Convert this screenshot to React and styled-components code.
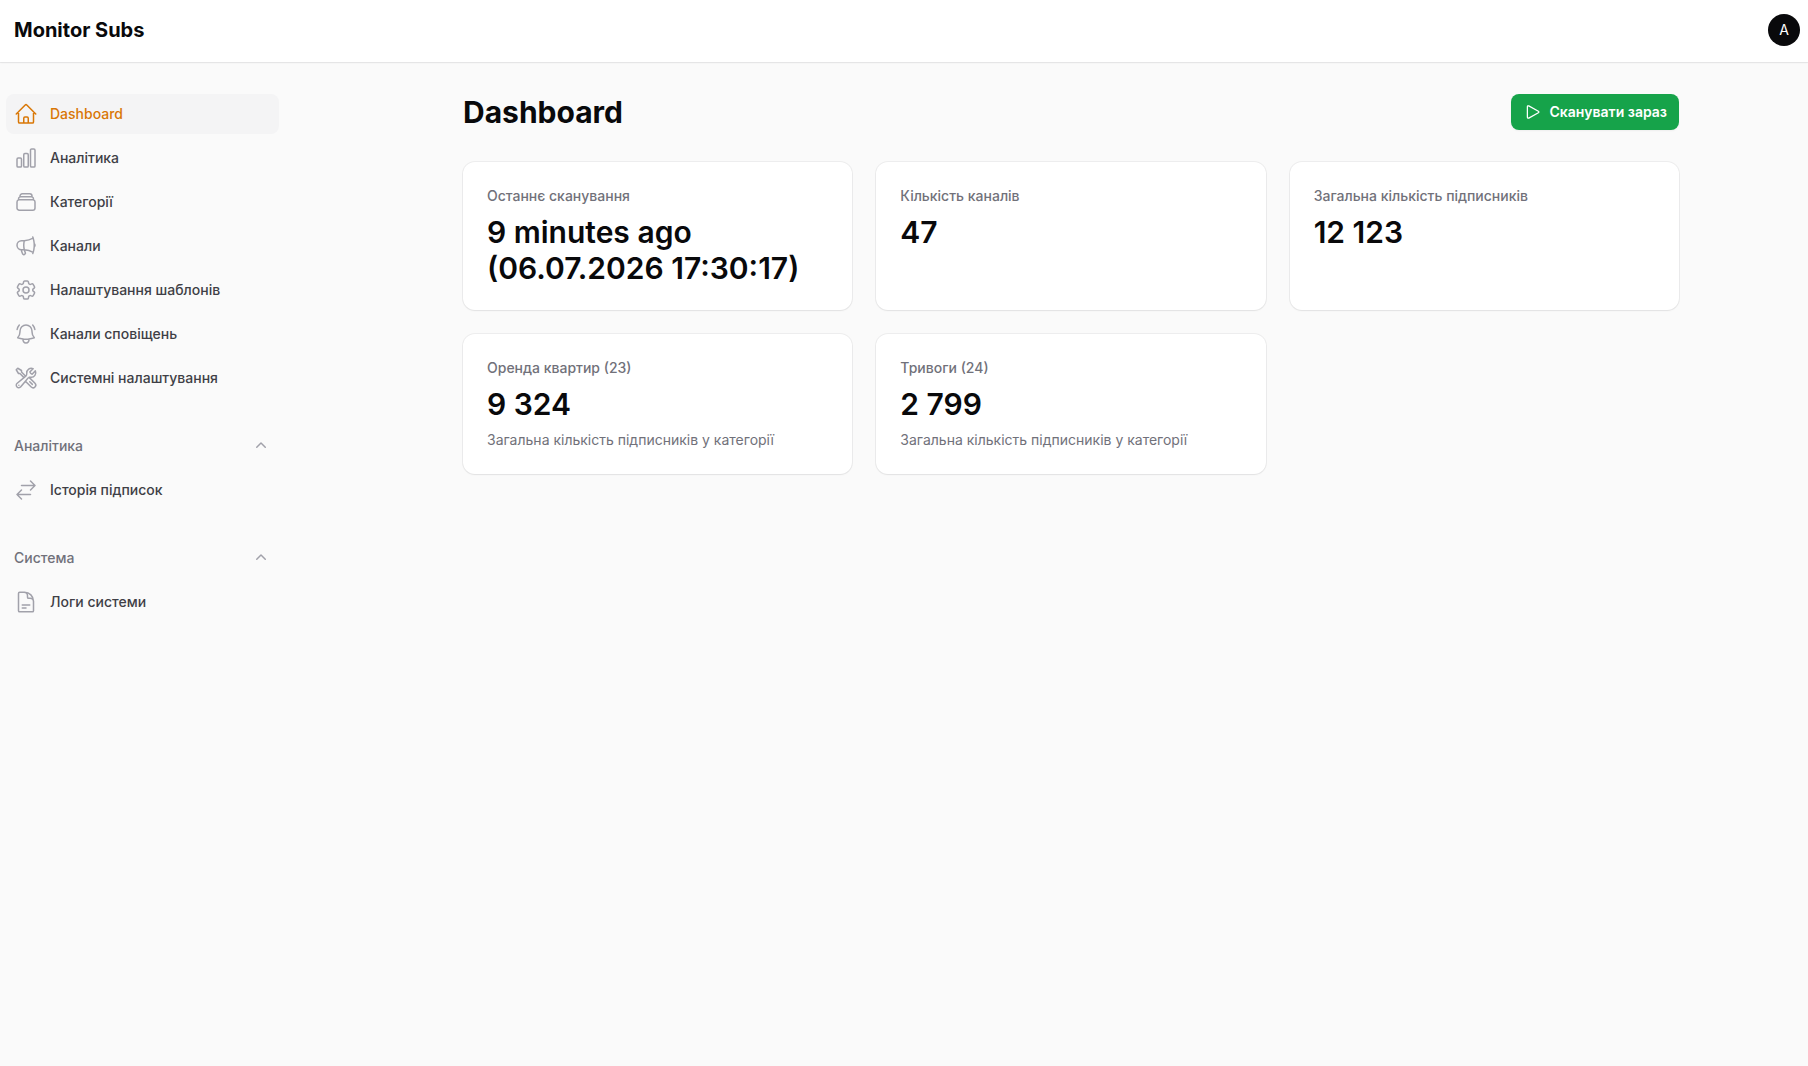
import { useState } from "react"
import styled, { createGlobalStyle } from "styled-components"
import {
	HiMiniChevronUp,
	HiOutlineArrowsRightLeft,
	HiOutlineBellAlert,
	HiOutlineChartBar,
	HiOutlineCog6Tooth,
	HiOutlineDocumentText,
	HiOutlineHome,
	HiOutlineMegaphone,
	HiOutlinePlay,
	HiOutlineRectangleStack,
	HiOutlineWrenchScrewdriver,
} from "react-icons/hi2"

const mainLinks = [
	{ label: "Dashboard", icon: HiOutlineHome },
	{ label: "Аналітика", icon: HiOutlineChartBar },
	{ label: "Категорії", icon: HiOutlineRectangleStack },
	{ label: "Канали", icon: HiOutlineMegaphone },
	{ label: "Налаштування шаблонів", icon: HiOutlineCog6Tooth },
	{ label: "Канали сповіщень", icon: HiOutlineBellAlert },
	{ label: "Системні налаштування", icon: HiOutlineWrenchScrewdriver },
]

const groups = [
	{
		title: "Аналітика",
		links: [{ label: "Історія підписок", icon: HiOutlineArrowsRightLeft }],
	},
	{
		title: "Система",
		links: [{ label: "Логи системи", icon: HiOutlineDocumentText }],
	},
]

const stats = [
	{ label: "Останнє сканування", value: "9 minutes ago (06.07.2026 17:30:17)" },
	{ label: "Кількість каналів", value: "47" },
	{ label: "Загальна кількість підписників", value: "12\u00a0123" },
	{ label: "Оренда квартир (23)", value: "9\u00a0324", description: "Загальна кількість підписників у категорії" },
	{ label: "Тривоги (24)", value: "2\u00a0799", description: "Загальна кількість підписників у категорії" },
]

function Links({ links, current, onSelect }) {
	return (
		<LinkList>
			{links.map(({ label, icon: Icon }) => (
				<li key={label}>
					<NavLink
						href="#"
						$active={label === current}
						aria-current={label === current ? "page" : undefined}
						onClick={event => {
							event.preventDefault()
							onSelect(label)
						}}
					>
						<Icon size={24} aria-hidden="true" />
						{label}
					</NavLink>
				</li>
			))}
		</LinkList>
	)
}

function NavGroup({ title, links, current, onSelect }) {
	const [open, setOpen] = useState(true)

	return (
		<Group>
			<GroupButton type="button" aria-expanded={open} $open={open} onClick={() => setOpen(!open)}>
				{title}
				<HiMiniChevronUp size={20} aria-hidden="true" />
			</GroupButton>
			{open && <Links {...{ links, current, onSelect }} />}
		</Group>
	)
}

function App() {
	const [current, setCurrent] = useState("Dashboard")

	return (
		<>
			<GlobalStyle />
			<Topbar>
				<Brand href="#">Monitor Subs</Brand>
				<Avatar type="button" aria-label="A">A</Avatar>
			</Topbar>
			<Layout>
				<Sidebar>
					<Links links={mainLinks} current={current} onSelect={setCurrent} />
					{groups.map(group => (
						<NavGroup key={group.title} {...group} current={current} onSelect={setCurrent} />
					))}
				</Sidebar>
				<Main>
					<PageHeader>
						<Heading>Dashboard</Heading>
						<ScanButton type="button">
							<HiOutlinePlay size={20} aria-hidden="true" />
							Сканувати зараз
						</ScanButton>
					</PageHeader>
					<Stats>
						{stats.map(stat => (
							<Card key={stat.label}>
								<Muted $medium>{stat.label}</Muted>
								<Value>{stat.value}</Value>
								{stat.description && <Muted>{stat.description}</Muted>}
							</Card>
						))}
					</Stats>
				</Main>
			</Layout>
		</>
	)
}

const GlobalStyle = createGlobalStyle`
	*, *::before, *::after {
		box-sizing: border-box;
	}

	body {
		margin: 0;
		background: #fafafa;
		color: #09090b;
		font-family: Inter, "Liberation Sans", sans-serif;
		font-size: 14px;
		line-height: 20px;
	}

	button {
		border: 0;
		font: inherit;
		cursor: pointer;
	}
`

const Topbar = styled.header`
	display: flex;
	align-items: center;
	justify-content: space-between;
	height: 62px;
	padding: 0 8px 2px 14px;
	background: #fff;
	box-shadow: 0 0 0 1px rgba(9, 9, 11, 0.05), 0 1px 2px rgba(0, 0, 0, 0.05);
`

const Brand = styled.a`
	color: #09090b;
	font-size: 20px;
	font-weight: 700;
	line-height: 20px;
	text-decoration: none;
`

const Avatar = styled.button`
	width: 32px;
	height: 32px;
	padding: 0;
	border-radius: 50%;
	background: #09090b;
	color: #fff;
`

const Layout = styled.div`
	display: flex;
	align-items: flex-start;
`

const Sidebar = styled.nav`
	display: flex;
	flex-direction: column;
	flex: 0 0 279px;
	gap: 28px;
	padding: 32px 0 32px 6px;
	margin-right: 55px;
`

const LinkList = styled.ul`
	display: flex;
	flex-direction: column;
	gap: 4px;
	margin: 0;
	padding: 0;
	list-style: none;
`

const NavLink = styled.a`
	display: flex;
	align-items: center;
	gap: 12px;
	padding: 8px;
	border-radius: 8px;
	background: ${({ $active }) => $active ? "#f4f4f5" : "transparent"};
	color: ${({ $active }) => $active ? "#d97706" : "#3f3f46"};
	font-weight: 500;
	text-decoration: none;

	svg {
		color: ${({ $active }) => $active ? "#d97706" : "#a1a1aa"};
	}

	&:hover {
		background: #f4f4f5;
	}
`

const Group = styled.div`
	display: flex;
	flex-direction: column;
	gap: 4px;
`

const GroupButton = styled.button`
	display: flex;
	align-items: center;
	justify-content: space-between;
	height: 40px;
	padding: 8px;
	background: none;
	color: #71717a;
	font-weight: 500;

	svg {
		color: #a1a1aa;
		transform: ${({ $open }) => $open ? "none" : "rotate(180deg)"};
	}
`

const Main = styled.main`
	flex: 1;
	min-width: 0;
	max-width: 1280px;
	margin: 0 auto;
	padding: 32px;
`

const PageHeader = styled.div`
	display: flex;
	align-items: center;
	justify-content: space-between;
	margin-bottom: 32px;
`

const Heading = styled.h1`
	margin: 0;
	font-size: 30px;
	font-weight: 700;
	line-height: 36px;
`

const ScanButton = styled.button`
	display: flex;
	align-items: center;
	gap: 6px;
	padding: 8px 12px;
	border-radius: 8px;
	background: #16a34a;
	box-shadow: 0 1px 2px rgba(0, 0, 0, 0.05);
	color: #fff;
	font-weight: 600;
`

const Stats = styled.section`
	display: grid;
	grid-template-columns: repeat(3, minmax(0, 1fr));
	gap: 24px;
`

const Card = styled.article`
	display: flex;
	flex-direction: column;
	gap: 8px;
	padding: 24px;
	border-radius: 12px;
	background: #fff;
	box-shadow: 0 0 0 1px rgba(9, 9, 11, 0.05), 0 1px 2px rgba(0, 0, 0, 0.05);
`

const Muted = styled.div`
	color: #71717a;
	font-weight: ${({ $medium }) => $medium ? 500 : 400};
`

const Value = styled.div`
	font-size: 30px;
	font-weight: 600;
	line-height: 36px;
`

export default App
